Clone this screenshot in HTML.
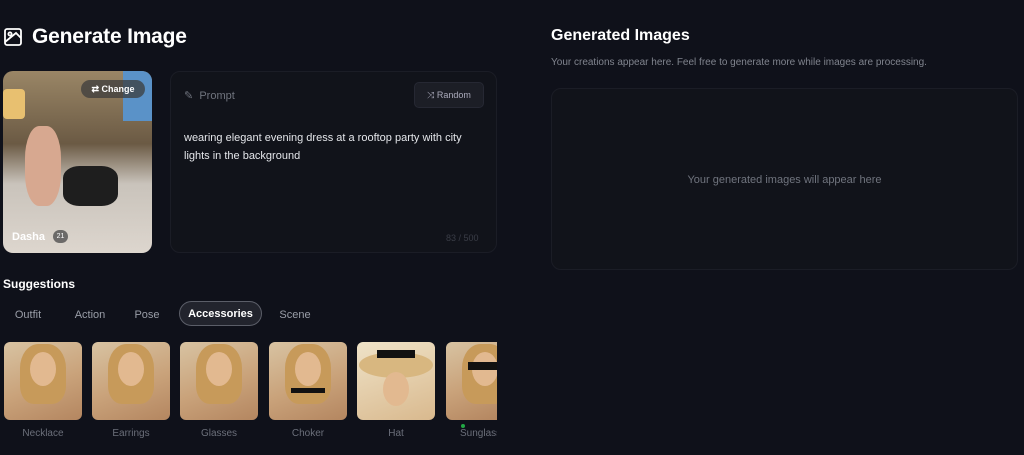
<!DOCTYPE html>
<html><head><style>
*{margin:0;padding:0;box-sizing:border-box}
body{width:1024px;height:455px;background:#0f111a;font-family:"Liberation Sans",sans-serif;color:#fff;position:relative;overflow:hidden}
.a{position:absolute}
.thumb{position:absolute;top:342px;width:78px;height:78px;border-radius:6px;background:linear-gradient(160deg,#d8c3a2,#c9a27a 55%,#b48660);overflow:hidden}
.face{position:absolute;left:26px;top:10px;width:26px;height:34px;border-radius:50%;background:#e2b990}
.hair{position:absolute;left:16px;top:2px;width:46px;height:60px;border-radius:40% 40% 30% 30%;background:#c79a5a}
.lbl{position:absolute;top:428px;font-size:10px;color:#6b6f7a;text-align:center;width:78px}
.tab{position:absolute;top:301px;height:25px;line-height:25px;font-size:11px;color:#9a9ea8;text-align:center;padding-top:2px}
</style></head><body>
<svg class="a" style="left:4px;top:28px" width="18" height="18" viewBox="0 0 18 18" fill="none" stroke="#fff" stroke-width="1.8"><rect x="1" y="1" width="16" height="16" rx="2"/><circle cx="6" cy="6" r="1.6"/><path d="M1 14 L12 5 L17 10"/></svg>
<div class="a" style="left:32px;top:25px;font-size:21px;font-weight:bold;letter-spacing:-0.2px">Generate Image</div>

<div class="a" style="left:3px;top:71px;width:149px;height:182px;border-radius:10px;overflow:hidden;background:linear-gradient(180deg,#9a8666 0%,#6b5a44 40%,#c9c3bb 62%,#ddd6ce 100%)">
 <div class="a" style="left:0;top:18px;width:22px;height:30px;background:#e8c070;border-radius:4px"></div>
 <div class="a" style="left:120px;top:0;width:29px;height:50px;background:#5a92c8"></div>
 <div class="a" style="left:22px;top:55px;width:36px;height:80px;background:#d7a890;border-radius:40%"></div>
 <div class="a" style="left:60px;top:95px;width:55px;height:40px;background:#1e1e1e;border-radius:30%"></div>
 <div class="a" style="left:78px;top:9px;width:64px;height:18px;border-radius:9px;background:rgba(60,60,60,.75);font-size:9px;font-weight:bold;line-height:18px;text-align:center">⇄ Change</div>
 <div class="a" style="left:9px;top:160px;font-size:11px;font-weight:bold">Dasha</div>
 <div class="a" style="left:50px;top:159px;width:15px;height:13px;border-radius:7px;background:rgba(80,80,80,.8);font-size:7px;text-align:center;line-height:13px">21</div>
</div>

<div class="a" style="left:170px;top:71px;width:327px;height:182px;border-radius:10px;background:#11131a;border:1px solid #1b1d26">
 <div class="a" style="left:13px;top:17px;font-size:11px;color:#70747e">✎ &nbsp;Prompt</div>
 <div class="a" style="left:243px;top:10px;width:70px;height:26px;border-radius:5px;background:#1c1e26;border:1px solid #262833;font-size:9px;color:#aab;line-height:24px;text-align:center">⤨ Random</div>
 <div class="a" style="left:13px;top:57px;width:305px;font-size:11px;line-height:18px;color:#e4e6ea">wearing elegant evening dress at a rooftop party with city lights in the background</div>
 <div class="a" style="left:275px;top:161px;font-size:9px;color:#3a3d47">83 / 500</div>
</div>

<div class="a" style="left:3px;top:277px;font-size:12px;font-weight:bold">Suggestions</div>
<div class="tab" style="left:5px;width:46px">Outfit</div>
<div class="tab" style="left:63px;width:54px">Action</div>
<div class="tab" style="left:127px;width:40px">Pose</div>
<div class="tab" style="left:179px;width:83px;border:1px solid #5b5e68;border-radius:13px;background:#22242d;color:#fff;font-weight:bold;line-height:21px">Accessories</div>
<div class="tab" style="left:270px;width:50px">Scene</div>

<div class="thumb" style="left:4px"><div class="hair"></div><div class="face"></div></div>
<div class="thumb" style="left:92px"><div class="hair"></div><div class="face"></div></div>
<div class="thumb" style="left:180px"><div class="hair"></div><div class="face"></div></div>
<div class="thumb" style="left:269px"><div class="hair"></div><div class="face"></div><div class="a" style="left:22px;top:46px;width:34px;height:5px;background:#111"></div></div>
<div class="thumb" style="left:357px;background:linear-gradient(160deg,#efe3c8,#d9b98e)"><div class="a" style="left:2px;top:10px;width:74px;height:26px;border-radius:50%;background:#d8b780"></div><div class="a" style="left:20px;top:8px;width:38px;height:8px;background:#111"></div><div class="face" style="top:30px"></div></div>
<div class="thumb" style="left:446px;width:51px;border-radius:6px 0 0 6px"><div class="hair"></div><div class="face"></div><div class="a" style="left:22px;top:20px;width:30px;height:8px;background:#111"></div></div>
<div class="lbl" style="left:4px">Necklace</div>
<div class="lbl" style="left:92px">Earrings</div>
<div class="lbl" style="left:180px">Glasses</div>
<div class="lbl" style="left:269px">Choker</div>
<div class="lbl" style="left:357px">Hat</div>
<div class="a" style="left:460px;top:428px;font-size:10px;color:#6b6f7a;width:37px;overflow:hidden;white-space:nowrap">Sunglasses</div>
<div class="a" style="left:461px;top:424px;width:4px;height:4px;border-radius:50%;background:#22a845"></div>

<div class="a" style="left:551px;top:27px;font-size:16px;font-weight:bold">Generated Images</div>
<div class="a" style="left:551px;top:57px;font-size:10px;color:#80848e">Your creations appear here. Feel free to generate more while images are processing.</div>
<div class="a" style="left:551px;top:88px;width:467px;height:182px;border-radius:10px;background:#11131a;border:1px solid #1b1d26;font-size:11px;color:#70747e;text-align:center;line-height:182px">Your generated images will appear here</div>
</body></html>
